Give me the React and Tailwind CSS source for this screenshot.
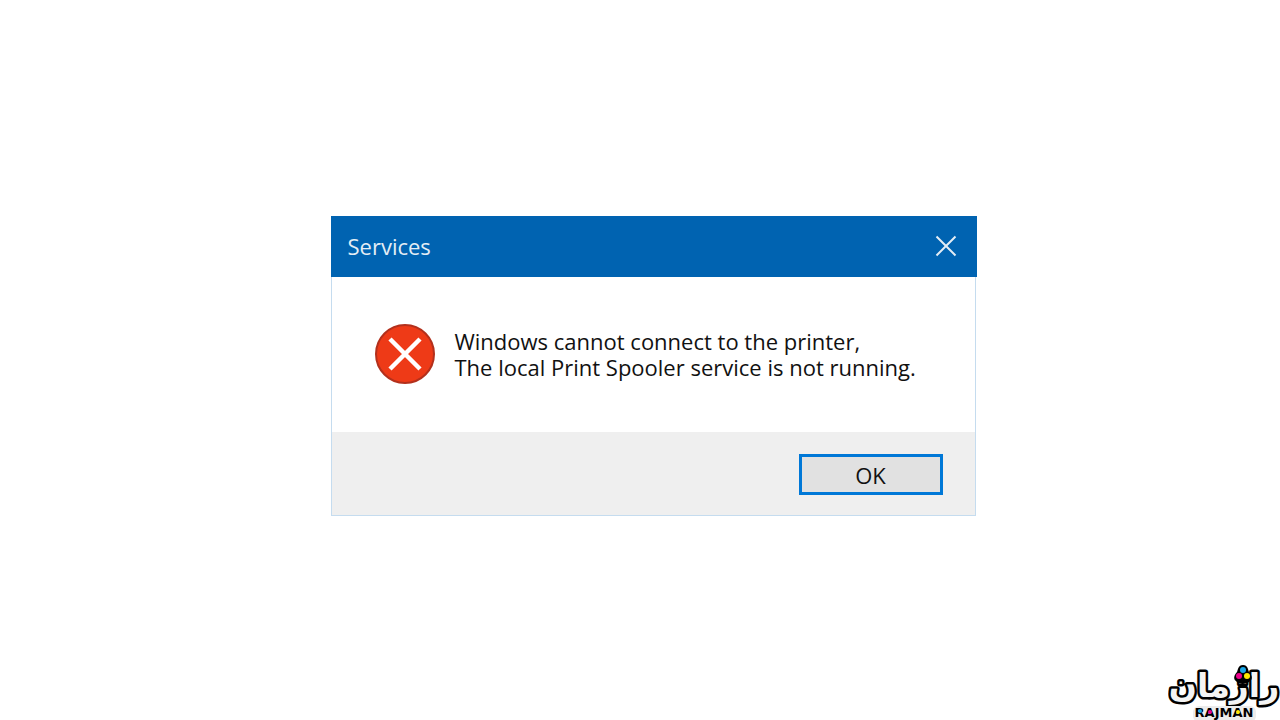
function CloseIcon() {
  return (
    <svg viewBox="0 0 22 22" className="size-[22px]" fill="none" stroke="currentColor" strokeWidth="2" aria-hidden="true">
      <path d="M1.5 1.5l19 19M20.5 1.5l-19 19" />
    </svg>
  )
}

function ErrorIcon() {
  return (
    <svg viewBox="0 0 60 60" className="size-[60px] shrink-0" role="img" aria-label="Error">
      <circle cx="30" cy="30" r="29" fill="#ee3a17" stroke="#b3301c" strokeWidth="2" />
      <path d="M15 15l30 30M45 15l-30 30" stroke="#fff" strokeWidth="4.5" fill="none" />
    </svg>
  )
}

function Logo() {
  return (
    <svg viewBox="0 0 112 56" className="absolute right-0 bottom-0 w-28 h-14" role="img" aria-label="Rajman">
      <text
        x="56"
        y="33"
        textAnchor="middle"
        direction="rtl"
        fontSize="33"
        fill="#f4f4f4"
        stroke="#000"
        strokeWidth="5"
        strokeLinejoin="round"
        paintOrder="stroke"
        className="font-['DejaVu_Sans',sans-serif] font-bold"
      >
        راژمان
      </text>
      {/* ink drops */}
      <path d="M75 1c-5 0-5 5-6 7-3 3-4 7-1 9 2 4 11 4 14 0 3-2 2-6-1-9-1-2-1-7-6-7z" />
      <circle cx="75" cy="6" r="3" fill="#1aa7e8" />
      <circle cx="71" cy="12" r="3" fill="#ec008c" />
      <circle cx="79" cy="12" r="3" fill="#ffe800" />
      <rect x="25" y="42" width="63" height="16" rx="6" fill="#ececec" />
      <text
        x="56"
        y="53"
        textAnchor="middle"
        fontSize="13"
        className="font-['DejaVu_Sans',sans-serif] font-bold"
      >
        RAJMAN
      </text>
      <circle cx="32" cy="47" r="2" fill="#1aa7e8" />
      <circle cx="42" cy="48" r="2" fill="#ec008c" />
      <circle cx="70" cy="48" r="2" fill="#ffe800" />
    </svg>
  )
}

export default function App() {
  return (
    <main className="relative min-h-screen flex items-center justify-center overflow-hidden bg-white pt-3 pl-[27px] font-['Open_Sans','Noto_Sans',sans-serif]">
      <section className="w-full max-w-[646px]" role="alertdialog" aria-labelledby="dialog-title" aria-describedby="dialog-message">
        <header className="flex items-center justify-between h-[61px] pl-[17px] pr-5 pb-0.5 bg-[#0063b1] text-[#e4edf5]">
          <h1 id="dialog-title" className="text-[22px] leading-7">Services</h1>
          <button type="button" aria-label="Close">
            <CloseIcon />
          </button>
        </header>
        <div className="mr-px border border-t-0 border-[#c5dcef]">
          <div className="flex items-center gap-5 h-[155px] pl-[43px] pr-6 pb-px bg-white">
            <ErrorIcon />
            <p id="dialog-message" className="text-[22px] leading-[26px] text-[#111]">
              Windows cannot connect to the printer,
              <br />
              The local Print Spooler service is not running.
            </p>
          </div>
          <footer className="flex items-center justify-end h-[83px] pt-0.5 pr-8 bg-[#efefef]">
            <button type="button" className="w-36 h-[41px] border-3 border-[#0078d7] bg-[#e1e1e1] text-[22px] leading-7 text-[#111]">
              OK
            </button>
          </footer>
        </div>
      </section>
      <Logo />
    </main>
  )
}
